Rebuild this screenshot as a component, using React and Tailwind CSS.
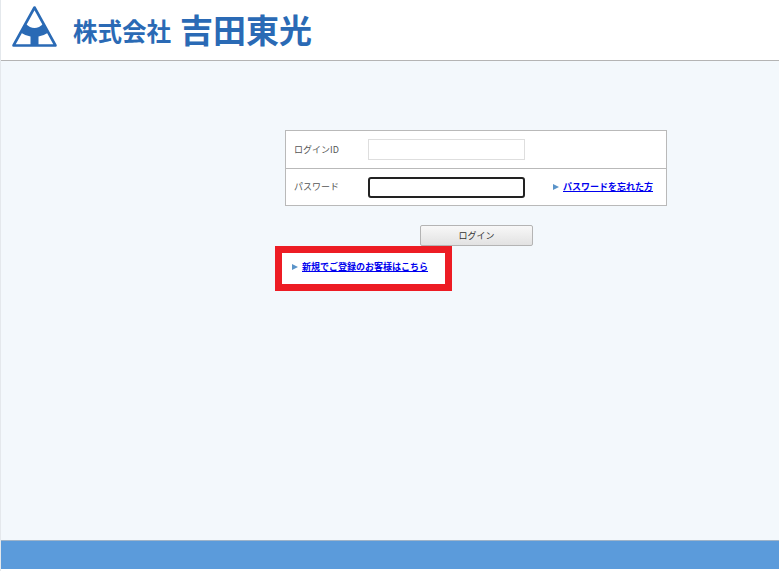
import React from 'react';

const FONT = '[font-family:"Noto_Sans_CJK_JP","Liberation_Sans",sans-serif]';

const Logo = () => (
  <svg width="46" height="43" viewBox="0 0 46 43" className="shrink-0">
    <path d="M22.5 2.5 L43.5 40.5 L1.5 40.5 Z" fill="none" stroke="#2a6ab5" strokeWidth="2.6" strokeLinejoin="round" />
    <path
      d="M13.5 18.5 Q18 23 22.5 23 Q27 23 31.5 18.5 L36.5 27.5 Q32 30.5 26.5 31.5 L26.5 40 L18.5 40 L18.5 31.5 Q13 30.5 8.5 27.5 Z"
      fill="#2a6ab5"
    />
  </svg>
);

const Arrow = () => (
  <span className="inline-block h-0 w-0 border-y-[3.5px] border-l-[6px] border-y-transparent border-l-[#5b94c9]" />
);

const TextBox = ({ focused }) => (
  <input
    type="text"
    aria-label="input"
    className={
      focused
        ? 'h-[21px] w-[157px] rounded-[3px] border-2 border-[#222222] bg-white outline-none'
        : 'h-[21px] w-[157px] border border-[#dedede] bg-white outline-none'
    }
  />
);

export default function App() {
  return (
    <div className={`flex h-[571px] w-[779px] flex-col overflow-hidden border-l border-[#e4e8ec] bg-white ${FONT}`}>
      <header className="flex h-[61px] shrink-0 items-start border-b border-[#b4b4b4] bg-white pl-[11px] pt-[5px]">
        <Logo />
        <span className="ml-[15px] mt-[9px] text-[24.5px] font-bold leading-[34px] text-[#2a6ab5]">株式会社</span>
        <span className="ml-[9px] mt-[1px] text-[33px] font-bold leading-[46px] text-[#2a6ab5]">吉田東光</span>
      </header>

      <main className="min-h-0 flex-1 bg-[#f3f8fc] pl-[284px] pt-[69px]">
        <div className="w-[382px] border border-[#b9b9b9] bg-white">
          <div className="flex h-[38px] items-center border-b border-[#b9b9b9] pl-[8px]">
            <span className="w-[74px] text-[9px] leading-[12px] text-[#555555]">ログインID</span>
            <TextBox />
          </div>
          <div className="flex h-[36px] items-center pl-[8px]">
            <span className="w-[74px] text-[9px] leading-[12px] text-[#555555]">パスワード</span>
            <TextBox focused />
            <span className="ml-[28px] flex">
              <Arrow />
            </span>
            <a href="#" className="ml-[4px] text-[9px] font-semibold leading-[12px] text-[#0000ee] underline">パスワードを忘れた方</a>
          </div>
        </div>

        <button className="ml-[135px] mt-[19px] block h-[21px] w-[113px] rounded-[2px] border border-[#b4b4b4] bg-gradient-to-b from-[#f8f8f8] to-[#e2e2e2] text-[9px] leading-[12px] text-[#333333]">
          ログイン
        </button>

        <div className="-ml-[10px] flex h-[45px] w-[177px] items-center border-[7px] border-[#ed1c24] bg-white pb-[3px] pl-[10px]">
          <Arrow />
          <a href="#" className="ml-[4px] text-[9px] font-semibold leading-[12px] text-[#0000ee] underline">新規でご登録のお客様はこちら</a>
        </div>
      </main>

      <footer className="h-[29px] shrink-0 border-t border-[#9fb4c9] bg-[#5b9bdb]" />
      <div className="h-[2px] shrink-0 bg-white" />
    </div>
  );
}
